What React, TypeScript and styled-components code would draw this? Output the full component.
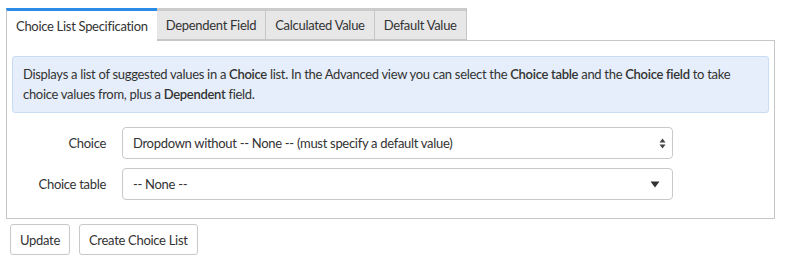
import styled, { createGlobalStyle } from "styled-components";

const GlobalStyle = createGlobalStyle`
  html, body {
    margin: 0;
    padding: 0;
    background: #fff;
  }
  body {
    font-family: Lato, "Liberation Sans", sans-serif;
    font-size: 13px;
    letter-spacing: -0.3px;
    color: #333;
  }
`;

const Page = styled.div`
  padding: 8px 12px 0 6px;
  width: 787px;
  box-sizing: border-box;
`;

const TabBar = styled.div`
  display: flex;
  align-items: flex-end;
  height: 32px;
`;

const Tab = styled.div<{ $active?: boolean }>`
  box-sizing: border-box;
  height: ${(p) => (p.$active ? "33px" : "32px")};
  margin-bottom: ${(p) => (p.$active ? "-1px" : "0")};
  padding: 0 9px 1px 9px;
  display: flex;
  align-items: center;
  white-space: nowrap;
  position: relative;
  z-index: ${(p) => (p.$active ? 1 : 0)};
  background: ${(p) => (p.$active ? "#fff" : "#e7e7e8")};
  border-top: 3px solid ${(p) => (p.$active ? "#2b8ce8" : "#cbcbcb")};
  border-left: 1px solid #c6c6c6;
  border-right: ${(p) => (p.$active ? "none" : "1px solid #c6c6c6")};
  border-bottom: ${(p) => (p.$active ? "none" : "1px solid #c6c6c6")};
  & + & {
    border-left: ${(p) => (p.$active ? "1px solid #c6c6c6" : "none")};
  }
  color: #333;
`;

const Panel = styled.div`
  border: 1px solid #c6c6c6;
  padding: 15px 5px 19px 5px;
  height: 179px;
  box-sizing: border-box;
`;

const InfoBox = styled.div`
  background: #e5eefa;
  border: 1px solid #cadcf3;
  border-radius: 3px;
  padding: 7px 10px 8px 10px;
  line-height: 20px;
  color: #333;
`;

const Strong = styled.span`
  font-weight: 600;
`;

const Form = styled.div`
  display: flex;
  flex-direction: column;
  gap: 9px;
  margin-top: 14px;
`;

const Row = styled.div`
  display: flex;
  align-items: center;
  gap: 16px;
`;

const Label = styled.label`
  flex: none;
  width: 94px;
  text-align: right;
  white-space: nowrap;
  color: #333;
`;

const SelectBox = styled.div`
  flex: none;
  box-sizing: border-box;
  width: 551px;
  height: 32px;
  border: 1px solid #c9c9c9;
  border-radius: 4px;
  background: #fff;
  display: flex;
  align-items: center;
  justify-content: space-between;
  padding: 0 6px 0 10px;
  color: #333;
`;

const Caret = styled.svg<{ $inset?: number }>`
  display: block;
  margin-right: ${(p) => p.$inset ?? 0}px;
`;

const Actions = styled.div`
  display: flex;
  gap: 9px;
  margin: 5px 0 0 4px;
`;

const Button = styled.button`
  box-sizing: border-box;
  height: 31px;
  padding: 0 9px;
  border: 1px solid #c9c9c9;
  border-radius: 3px;
  background: #fff;
  font-family: inherit;
  font-size: 13px;
  letter-spacing: inherit;
  color: #333;
`;

export default function App() {
  return (
    <>
      <GlobalStyle />
      <Page>
        <TabBar>
          <Tab $active>Choice List Specification</Tab>
          <Tab>Dependent Field</Tab>
          <Tab>Calculated Value</Tab>
          <Tab>Default Value</Tab>
        </TabBar>
        <Panel>
          <InfoBox>
            Displays a list of suggested values in a <Strong>Choice</Strong> list. In the Advanced view you can
            select the <Strong>Choice table</Strong> and the <Strong>Choice field</Strong> to take choice values
            from, plus a <Strong>Dependent</Strong> field.
          </InfoBox>
          <Form>
            <Row>
              <Label>Choice</Label>
              <SelectBox>
                <span>Dropdown without -- None -- (must specify a default value)</span>
                <Caret width="7" height="11" viewBox="0 0 7 11">
                  <path d="M3.5 0.5 L6.5 4.5 L0.5 4.5 Z" fill="#444" />
                  <path d="M3.5 10.5 L6.5 6.5 L0.5 6.5 Z" fill="#444" />
                </Caret>
              </SelectBox>
            </Row>
            <Row>
              <Label>Choice table</Label>
              <SelectBox>
                <span>-- None --</span>
                <Caret width="10" height="7" viewBox="0 0 10 7" $inset={6}>
                  <path d="M0.5 0.5 L9.5 0.5 L5 6.5 Z" fill="#333" />
                </Caret>
              </SelectBox>
            </Row>
          </Form>
        </Panel>
        <Actions>
          <Button>Update</Button>
          <Button>Create Choice List</Button>
        </Actions>
      </Page>
    </>
  );
}
